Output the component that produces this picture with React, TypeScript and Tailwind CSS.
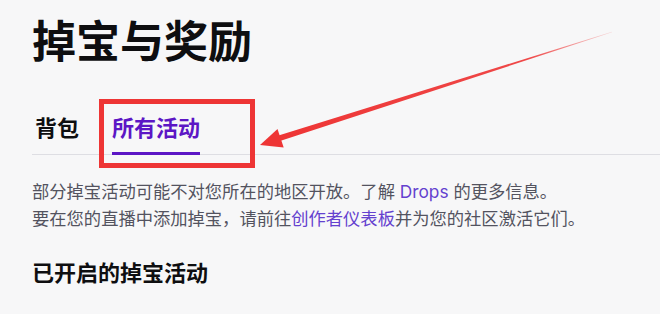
import React from "react";

export default function App() {
  return (
    <div
      className="relative w-[660px] h-[314px] overflow-hidden bg-[#f7f7f8] pl-[32px]"
      style={{ fontFamily: 'Inter, "Noto Sans CJK SC", sans-serif' }}
    >
      <h1 className="pt-[14px] text-[44px] leading-[56px] font-bold text-[#0e0e10]">掉宝与奖励</h1>
      <div className="mt-[43px] flex items-end gap-[33px] border-b border-[#dedee3] pl-[3px]">
        <div className="pb-[11px] text-[22px] leading-[30px] font-bold text-[#0e0e10]">背包</div>
        <div className="-mb-px border-b-[3px] border-[#5c16c5] pb-[9px] text-[22px] leading-[30px] font-bold text-[#5c16c5]">
          所有活动
        </div>
      </div>
      <div className="mt-[23px] text-[17.3px] leading-[27px] text-[#53535f]">
        <p>
          部分掉宝活动可能不对您所在的地区开放。了解 <span className="text-[#6441cf]">Drops</span> 的更多信息。
        </p>
        <p>
          要在您的直播中添加掉宝，请前往<span className="text-[#6441cf]">创作者仪表板</span>并为您的社区激活它们。
        </p>
      </div>
      <h2 className="mt-[26px] text-[22px] leading-[30px] font-bold text-[#0e0e10]">已开启的掉宝活动</h2>

      <svg className="pointer-events-none absolute left-0 top-0" width="660" height="314" viewBox="0 0 660 314">
        <defs>
          <linearGradient id="fade" gradientUnits="userSpaceOnUse" x1="280" y1="138" x2="612" y2="32">
            <stop offset="0" stopColor="#ee3535" stopOpacity="1" />
            <stop offset="0.75" stopColor="#ee3535" stopOpacity="0.9" />
            <stop offset="1" stopColor="#ee3535" stopOpacity="0.15" />
          </linearGradient>
        </defs>
        <rect x="101.5" y="101.5" width="151" height="64" fill="none" stroke="#ee3535" strokeWidth="5" />
        <polygon points="280,141 278.5,135.5 612,31.8 612.1,32.3" fill="url(#fade)" />
        <polygon points="260,145 283.7,147.5 277.5,129" fill="#ee3535" />
      </svg>
    </div>
  );
}
